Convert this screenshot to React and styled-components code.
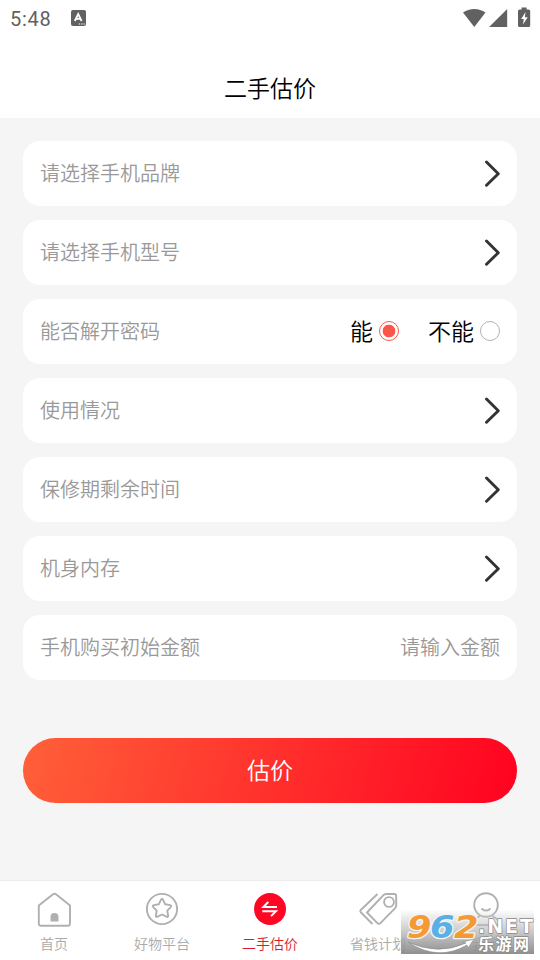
import React, { useState } from 'react';
import styled, { createGlobalStyle } from 'styled-components';

const GlobalStyle = createGlobalStyle`
  * {
    box-sizing: border-box;
  }
  body {
    margin: 0;
    background-color: #f5f5f5;
    font-family: Roboto, "Noto Sans CJK SC", sans-serif;
    font-weight: 350;
  }
  button, input {
    font-family: inherit;
    font-weight: inherit;
  }
`;

const Screen = styled.div`
  display: flex;
  flex-direction: column;
  position: relative;
  width: 540px;
  height: 960px;
  overflow: hidden;
  background-color: #f5f5f5;
`;

const StatusBar = styled.div`
  display: flex;
  align-items: center;
  height: 36px;
  padding: 0 8px 1px 10px;
  background-color: #fff;
  color: #616161;
`;

const Clock = styled.span`
  width: 61px;
  padding-top: 2px;
  font-family: Roboto, sans-serif;
  font-size: 20px;
  font-weight: 400;
  letter-spacing: 0.7px;
`;

const StatusIcons = styled.div`
  display: flex;
  align-items: center;
  margin-left: auto;
`;

const Header = styled.header`
  display: flex;
  justify-content: center;
  align-items: center;
  height: 82px;
  padding-top: 25px;
  background-color: #fff;
`;

const Title = styled.h1`
  margin: 0;
  font-size: 23px;
  line-height: 34px;
  font-weight: 350;
  color: #000;
`;

const Form = styled.main`
  flex: 1;
  display: flex;
  flex-direction: column;
  gap: 14px;
  padding: 23px 23px 0;
`;

const Row = styled.div`
  display: flex;
  justify-content: space-between;
  align-items: center;
  height: 65px;
  padding: 0 17px;
  border-radius: 17px;
  background-color: #fff;
`;

const Label = styled.span`
  font-size: 20px;
  line-height: 30px;
  color: #999;
`;

const Options = styled.div`
  display: flex;
  gap: 29px;
`;

const Option = styled.label`
  display: flex;
  align-items: center;
  gap: 6px;
  padding-top: 3px;
  font-size: 23px;
  line-height: 34px;
  color: #000;
`;

const Radio = styled.input`
  appearance: none;
  width: 20px;
  height: 20px;
  margin: 0 0 5px;
  border: 1.5px solid #b2b2b2;
  border-radius: 50%;
  background: #fff;
  &:checked {
    border-color: #fa5a50;
    background: radial-gradient(circle, #fc5549 6px, #fff 6.7px);
  }
`;

const AmountInput = styled.input`
  width: 140px;
  padding: 0;
  border: 0;
  outline: 0;
  text-align: right;
  font-size: 20px;
  line-height: 30px;
  color: #333;
  &::placeholder {
    color: #999;
  }
`;

const Submit = styled.button`
  height: 65px;
  margin-top: 44px;
  padding: 0 0 3px;
  border: 0;
  border-radius: 33px;
  background: linear-gradient(105deg, #ff6039, #ff0220);
  color: #fff;
  font-size: 23px;
`;

const TabBar = styled.nav`
  display: flex;
  height: 80px;
  border-top: 1px solid #ececec;
  background-color: #fff;
`;

const Tab = styled.div`
  flex: 1;
  display: flex;
  flex-direction: column;
  align-items: center;
  padding-top: 10px;
  font-size: 14px;
  line-height: 20px;
  color: ${(props) => (props.$active ? '#d81e2c' : '#aaa')};
  svg {
    margin-bottom: 7px;
  }
`;

const Watermark = styled.div`
  position: absolute;
  left: 401px;
  top: 910px;
  width: 133px;
  height: 44px;
  background: linear-gradient(rgba(235, 235, 235, 0.1), rgba(190, 190, 190, 0.75) 45%, rgba(132, 132, 132, 0.9));
  svg {
    display: block;
    overflow: visible;
  }
`;

const Arrow = () => (
  <svg width="17" height="30" viewBox="0 0 17 30" fill="none" stroke="#333" strokeWidth="2.9" strokeLinecap="round" strokeLinejoin="round">
    <path d="M3.5 3 15.3 14.7 3.5 26.3" />
  </svg>
);

const KeyboardIcon = () => (
  <svg width="15" height="16" viewBox="0 0 15 16">
    <rect width="15" height="16" rx="2" fill="#616161" />
    <path d="M3.8 11 7.2 4 10.6 11M5.2 8.8h4" fill="none" stroke="#fff" strokeWidth="1.8" />
    <path d="M7.8 14h1.3M10.2 14h1.3M12.5 14h1.3" stroke="#fff" strokeWidth="1.2" />
  </svg>
);

const SignalIcons = () => (
  <svg width="70" height="22" viewBox="0 0 70 22" fill="#616161">
    <path d="M1 5.5C7.5.8 17 .8 23.5 5.5L12.3 20Z" />
    <path d="M45.2 2v18H27.1Z" />
    <path d="M57.6 2.4h2V.5h5v1.9h2q1.6 0 1.6 1.6v14.4q0 1.6-1.6 1.6h-9q-1.6 0-1.6-1.6V4q0-1.6 1.6-1.6Z" />
    <path d="m63.5 5-4.3 7h2.6l-.8 5.6 4.7-7.4h-2.8Z" fill="#fff" />
  </svg>
);

const HomeIcon = () => (
  <svg width="36" height="36" viewBox="0 0 36 36" fill="none" stroke="#b0b0b0" strokeWidth="1.9" strokeLinejoin="round">
    <path d="M2.8 14.5 17 3.2q1.5-1 3 0L34 14.5V32.5q0 2.2-2.2 2.2H5q-2.2 0-2.2-2.2Z" />
    <path d="M14.5 30.5V26a4 4 0 0 1 8 0v4.5Z" fill="#b0b0b0" stroke="none" />
  </svg>
);

const StarIcon = () => (
  <svg width="36" height="36" viewBox="0 0 36 36" fill="none" stroke="#b0b0b0" strokeWidth="1.9" strokeLinejoin="round">
    <circle cx="18" cy="18" r="15.1" />
    <path d="M16.9 8.9q1.1-1.8 2.2 0l2.1 4.4 4.8.8q2 .5.7 2l-3.4 3.5.8 4.9q.2 2-1.7 1.2L18 23.5l-4.4 2.2q-1.9.8-1.7-1.2l.8-4.9-3.4-3.5q-1.3-1.5.7-2l4.8-.8Z" />
  </svg>
);

const SwapIcon = () => (
  <svg width="36" height="36" viewBox="0 0 36 36">
    <circle cx="18" cy="18" r="16" fill="#fd0724" />
    <path d="M25 16H11.3L16.3 11M10.3 20.2H24L19 25.2" fill="none" stroke="#fff" strokeWidth="1.9" />
  </svg>
);

const TagIcon = () => (
  <svg width="40" height="36" viewBox="0 0 40 36" fill="none" stroke="#b0b0b0" strokeWidth="1.9" strokeLinejoin="round">
    <path d="M9 21.5 24.7 4.8Q26.2 3 28.4 3H36.2q2 0 2 2v9.2q0 1.8-1.3 3.2L22.4 32.2q-1.5 1.5-3 0L9 21.5Z" />
    <path d="M19.5 3 3 18.8q-1.3 1.3 0 2.7L14.4 33" />
    <circle cx="31" cy="11" r="4.9" />
  </svg>
);

const ProfileIcon = () => (
  <svg width="36" height="36" viewBox="0 0 36 36" fill="none" stroke="#b0b0b0" strokeWidth="1.9" strokeLinecap="round">
    <circle cx="18" cy="14" r="11.8" />
    <path d="M14 18q4 3.2 8 0M11 25.5Q4 29 4 34h28q0-5-7-8.5" />
  </svg>
);

const WatermarkLogo = () => (
  <svg width="133" height="44" viewBox="0 0 133 44" fontFamily="'DejaVu Sans', sans-serif" fontWeight="700" strokeLinejoin="round">
    <g fontSize="32" fontStyle="italic" stroke="#f4f4f4" strokeWidth="2.6" paintOrder="stroke">
      <text x="6" y="27.5" fill="#f49a35" textLength="24.5" lengthAdjust="spacingAndGlyphs">9</text>
      <text x="29" y="27.5" fill="#5ab0e6" textLength="24.5" lengthAdjust="spacingAndGlyphs">6</text>
      <text x="53" y="27.5" fill="#f49a35" textLength="24.5" lengthAdjust="spacingAndGlyphs">2</text>
    </g>
    <path d="M7 32Q37 46 65 33l-3-1 11-3-6 9-1-3Q37 52 7 32Z" fill="#fff" stroke="#888" strokeWidth="0.6" />
    <g fill="#fff" stroke="#888" strokeWidth="1.4" paintOrder="stroke">
      <text x="77" y="22.5" fontSize="19" textLength="55">.NET</text>
      <text x="77" y="40" fontSize="16" fontFamily="'Noto Sans CJK SC', sans-serif" textLength="51">乐游网</text>
    </g>
  </svg>
);

const topFields = ['请选择手机品牌', '请选择手机型号'];
const bottomFields = ['使用情况', '保修期剩余时间', '机身内存'];

const tabs = [
  { name: '首页', Icon: HomeIcon },
  { name: '好物平台', Icon: StarIcon },
  { name: '二手估价', Icon: SwapIcon },
  { name: '省钱计划', Icon: TagIcon },
  { name: '我的', Icon: ProfileIcon },
];

const SelectRow = ({ label }) => (
  <Row>
    <Label>{label}</Label>
    <Arrow />
  </Row>
);

const App = () => {
  const [unlock, setUnlock] = useState(true);
  const [amount, setAmount] = useState('');

  return (
    <Screen>
      <GlobalStyle />
      <StatusBar>
        <Clock>5:48</Clock>
        <KeyboardIcon />
        <StatusIcons><SignalIcons /></StatusIcons>
      </StatusBar>
      <Header>
        <Title>二手估价</Title>
      </Header>
      <Form>
        {topFields.map((label) => <SelectRow key={label} label={label} />)}
        <Row>
          <Label>能否解开密码</Label>
          <Options>
            <Option>能<Radio type="radio" name="unlock" checked={unlock} onChange={() => setUnlock(true)} /></Option>
            <Option>不能<Radio type="radio" name="unlock" checked={!unlock} onChange={() => setUnlock(false)} /></Option>
          </Options>
        </Row>
        {bottomFields.map((label) => <SelectRow key={label} label={label} />)}
        <Row>
          <Label>手机购买初始金额</Label>
          <AmountInput placeholder="请输入金额" value={amount} onChange={(e) => setAmount(e.target.value)} />
        </Row>
        <Submit>估价</Submit>
      </Form>
      <TabBar>
        {tabs.map(({ name, Icon }) => (
          <Tab key={name} $active={name === '二手估价'}>
            <Icon />
            {name}
          </Tab>
        ))}
      </TabBar>
      <Watermark><WatermarkLogo /></Watermark>
    </Screen>
  );
};

export default App;
